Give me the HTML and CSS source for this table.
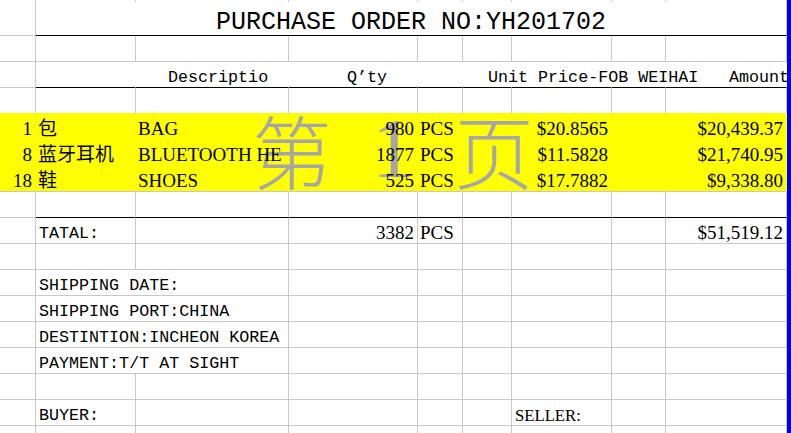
FILE: index.html
```html
<!DOCTYPE html>
<html lang="en">
<head>
    <meta charset="UTF-8">
    <meta name="viewport" content="width=device-width, initial-scale=1.0">
    <title>Purchase Order YH201702</title>
    <link rel="stylesheet" href="styles.css">
</head>
<body>
<div class="page">
    <div class="sheet">
        <!-- page number watermark (page break preview) -->
        <div class="watermark"><span class="wm-cjk">第</span><span class="wm-num">1</span><span class="wm-cjk">页</span></div>

        <div class="grid">
            <!-- row cut off above the title -->
            <div class="c top"></div><div class="c top"></div><div class="c top"></div><div class="c top"></div><div class="c top"></div><div class="c top"></div><div class="c top"></div><div class="c top"></div><div class="c top"></div>

            <!-- title -->
            <div class="c"></div>
            <div class="c span8 rule title"><span>PURCHASE ORDER NO:YH201702</span></div>

            <div class="c"></div><div class="c"></div><div class="c"></div><div class="c"></div><div class="c"></div><div class="c"></div><div class="c"></div><div class="c"></div><div class="c"></div>

            <!-- column headings -->
            <div class="c"></div>
            <div class="c open rule"></div>
            <div class="c open rule h-desc"><span>Descriptio</span></div>
            <div class="c open rule h-qty"><span>Q’ty</span></div>
            <div class="c open rule"></div>
            <div class="c open rule h-price"><span>Unit Price-FOB WEIHAI</span></div>
            <div class="c open rule"></div>
            <div class="c open rule"></div>
            <div class="c open rule h-amt"><span>Amount</span></div>

            <div class="c pre"></div><div class="c pre"></div><div class="c pre"></div><div class="c pre"></div><div class="c pre"></div><div class="c pre"></div><div class="c pre"></div><div class="c pre"></div><div class="c pre"></div>

            <!-- items -->
            <div class="c fill serif num"><span>1</span></div>
            <div class="c fill serif"><span>包</span></div>
            <div class="c fill serif"><span>BAG</span></div>
            <div class="c fill serif num"><span>980</span></div>
            <div class="c fill serif"><span>PCS</span></div>
            <div class="c fill"></div>
            <div class="c fill serif num"><span>$20.8565</span></div>
            <div class="c fill"></div>
            <div class="c fill serif num"><span>$20,439.37</span></div>

            <div class="c fill serif num"><span>8</span></div>
            <div class="c fill serif"><span>蓝牙耳机</span></div>
            <div class="c fill serif clip"><span>BLUETOOTH HE</span></div>
            <div class="c fill serif num"><span>1877</span></div>
            <div class="c fill serif"><span>PCS</span></div>
            <div class="c fill"></div>
            <div class="c fill serif num"><span>$11.5828</span></div>
            <div class="c fill"></div>
            <div class="c fill serif num"><span>$21,740.95</span></div>

            <div class="c fill last serif num"><span>18</span></div>
            <div class="c fill last serif"><span>鞋</span></div>
            <div class="c fill last serif"><span>SHOES</span></div>
            <div class="c fill last serif num"><span>525</span></div>
            <div class="c fill last serif"><span>PCS</span></div>
            <div class="c fill last"></div>
            <div class="c fill last serif num"><span>$17.7882</span></div>
            <div class="c fill last"></div>
            <div class="c fill last serif num"><span>$9,338.80</span></div>

            <div class="c"></div><div class="c rule"></div><div class="c rule"></div><div class="c rule"></div><div class="c rule"></div><div class="c rule"></div><div class="c rule"></div><div class="c rule"></div><div class="c rule"></div>

            <!-- total -->
            <div class="c"></div>
            <div class="c"><span>TATAL:</span></div>
            <div class="c"></div>
            <div class="c serif num"><span>3382</span></div>
            <div class="c serif"><span>PCS</span></div>
            <div class="c"></div>
            <div class="c"></div>
            <div class="c"></div>
            <div class="c serif num"><span>$51,519.12</span></div>

            <div class="c"></div><div class="c"></div><div class="c"></div><div class="c"></div><div class="c"></div><div class="c"></div><div class="c"></div><div class="c"></div><div class="c"></div>

            <!-- terms -->
            <div class="c"></div><div class="c span2"><span>SHIPPING DATE:</span></div><div class="c"></div><div class="c"></div><div class="c"></div><div class="c"></div><div class="c"></div><div class="c"></div>
            <div class="c"></div><div class="c span2"><span>SHIPPING PORT:CHINA</span></div><div class="c"></div><div class="c"></div><div class="c"></div><div class="c"></div><div class="c"></div><div class="c"></div>
            <div class="c"></div><div class="c span2"><span>DESTINTION:INCHEON KOREA</span></div><div class="c"></div><div class="c"></div><div class="c"></div><div class="c"></div><div class="c"></div><div class="c"></div>
            <div class="c"></div><div class="c span2"><span>PAYMENT:T/T AT SIGHT</span></div><div class="c"></div><div class="c"></div><div class="c"></div><div class="c"></div><div class="c"></div><div class="c"></div>

            <div class="c"></div><div class="c"></div><div class="c"></div><div class="c"></div><div class="c"></div><div class="c"></div><div class="c"></div><div class="c"></div><div class="c"></div>

            <!-- signatures -->
            <div class="c"></div>
            <div class="c"><span>BUYER:</span></div>
            <div class="c"></div>
            <div class="c"></div>
            <div class="c"></div>
            <div class="c"></div>
            <div class="c sign"><span>SELLER:</span></div>
            <div class="c"></div>
            <div class="c"></div>

            <div class="c"></div><div class="c"></div><div class="c"></div><div class="c"></div><div class="c"></div><div class="c"></div><div class="c"></div><div class="c"></div><div class="c"></div>
        </div>
    </div>
    <div class="page-break"></div>
</div>
</body>
</html>
```

FILE: styles.css
```css
body {
    margin: 0;
    background: #fff;
    overflow: hidden;
}
.page {
    display: flex;
    width: 791px;
    height: 433px;
    overflow: hidden;
}
.sheet {
    position: relative;
    width: 787px;
    overflow: hidden;
    font-family: "Liberation Mono", monospace;
    font-size: 16.7px;
    line-height: 1;
    color: #000;
}
.page-break {
    width: 4px;
    background: #0000e6;
}
.grid {
    display: grid;
    grid-template-columns: 36px 100px 153px 129px 45px 49px 100px 54px 121px;
    grid-template-rows: 2px 34px repeat(16, 26px);
}
.c {
    display: flex;
    align-items: flex-end;
    min-width: 0;
    padding: 0 3px;
    white-space: nowrap;
    border-right: 1px solid #c8c8c8;
    border-bottom: 1px solid #c8c8c8;
}
.c span {
    position: relative;
}
.top {
    border-bottom: none;
}
.open {
    border-right-color: transparent;
}
.rule {
    border-bottom-color: #000;
}
.pre {
    border-bottom-color: #ff0;
}
.fill {
    background: #ff0;
    border-color: transparent;
}
.fill.last {
    border-bottom-color: #c8c8c8;
}
.num {
    justify-content: flex-end;
}
.clip {
    overflow: hidden;
}
.span2 {
    grid-column: span 2;
}
.span8 {
    grid-column: span 8;
    justify-content: center;
}
.title {
    font-size: 25px;
}
.serif {
    font-family: "Liberation Serif", "Noto Sans CJK SC", serif;
    font-size: 19px;
    padding-left: 2px;
    padding-bottom: 1.5px;
}
.sign {
    font-family: "Liberation Serif", serif;
    font-size: 16.7px;
}

/* heading offsets */
.h-desc {
    padding-left: 32px;
}
.h-qty {
    padding-left: 58px;
}
.h-price {
    padding-left: 25px;
}
.h-amt {
    padding-left: 63px;
}

/* watermark */
.watermark {
    position: absolute;
    top: 108px;
    left: 252px;
    display: flex;
    align-items: flex-start;
    color: #a6a6a6;
    line-height: 1;
}
.wm-cjk {
    font-family: "Noto Sans CJK SC", sans-serif;
    font-size: 80px;
    font-weight: 300;
}
.wm-num {
    font-family: "Liberation Serif", serif;
    font-size: 84px;
    margin: -1px 40px 0 40px;
}
```
